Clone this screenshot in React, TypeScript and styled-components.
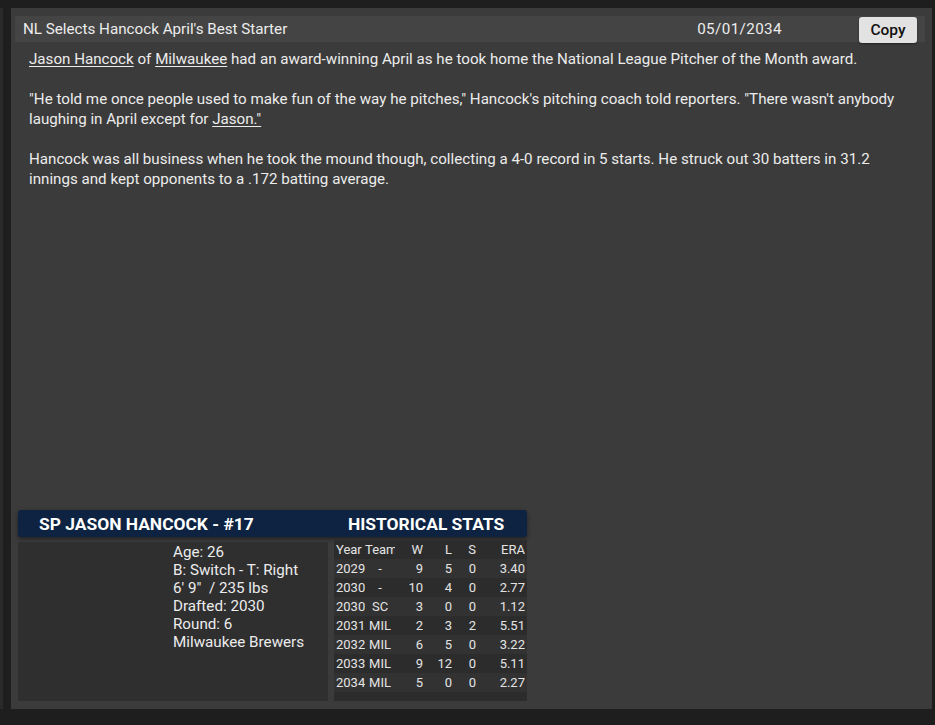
import * as React from "react";
import styled, { createGlobalStyle } from "styled-components";

const GlobalStyle = createGlobalStyle`
  html, body {
    margin: 0;
    padding: 0;
    background: #1e1e1e;
    font-family: Roboto, "Noto Sans", "Liberation Sans", sans-serif;
  }
`;

const Page = styled.div`
  width: 935px;
  height: 725px;
  display: flex;
  box-sizing: border-box;
  padding: 8px 3px 16px 0;
  background: #1e1e1e;
`;

const SideStrip = styled.div`
  width: 3px;
  margin-right: 8px;
  background: #2a2a2a;
`;

const Panel = styled.div`
  flex: 1;
  display: flex;
  flex-direction: column;
  background: #3b3b3b;
  padding: 8px 7px 8px 4px;
  color: #ececec;
`;

const TitleBar = styled.div`
  height: 26px;
  display: flex;
  align-items: center;
  background: #444444;
  padding: 0 8px;
  font-size: 15.2px;
`;

const Title = styled.div`
  flex: 1;
`;

const DateText = styled.div`
  margin-right: 77px;
  letter-spacing: 0.4px;
`;

const CopyButton = styled.button`
  height: 26px;
  width: 58px;
  margin-top: 2px;
  border: none;
  border-radius: 3px;
  background: #e2e2e2;
  color: #111;
  font-family: inherit;
  font-size: 15.5px;
  font-weight: 500;
  box-shadow: 0 1px 2px rgba(0, 0, 0, 0.4);
`;

const Article = styled.div`
  padding: 7px 14px 0 14px;
  font-size: 15.15px;
  line-height: 20px;
`;

const Para = styled.p`
  margin: 0 0 20px 0;
`;

const Link = styled.span`
  text-decoration: underline;
  text-underline-offset: 2px;
`;

const Spacer = styled.div`
  flex: 1;
`;

const Card = styled.div`
  width: 509px;
  margin-left: 3px;
  display: flex;
  flex-direction: column;
`;

const CardHeader = styled.div`
  height: 27px;
  display: grid;
  grid-template-columns: 310px 1fr;
  align-items: center;
  background: #0e2341;
  border-radius: 3px;
  box-shadow: 0 2px 4px rgba(0, 0, 0, 0.45);
  color: #ffffff;
  font-weight: 700;
  font-size: 17.4px;
`;

const HeaderCell = styled.div<{ $pad: number }>`
  padding-left: ${(p) => p.$pad}px;
  white-space: nowrap;
`;

const CardBody = styled.div`
  display: grid;
  grid-template-columns: 310px 193px;
  column-gap: 6px;
  margin-top: 3px;
  height: 161px;
`;

const InfoBox = styled.div`
  background: #2f2f30;
  margin-top: 2px;
  padding: 1px 0 0 155px;
  font-size: 15.2px;
  line-height: 18px;
`;

const InfoLine = styled.div`
  white-space: pre;
`;

const StatsTable = styled.div`
  background: #2c2c2c;
  padding-bottom: 8px;
  font-size: 13px;
`;

const StatRow = styled.div<{ $alt: boolean }>`
  height: 19px;
  display: grid;
  grid-template-columns: 29px 30px 28px 29px 24px 49px;
  align-items: center;
  padding: 0 2px;
  background: ${(p) => (p.$alt ? "#323232" : "#2c2c2c")};
  color: #e4e4e4;
`;

const Cell = styled.div<{ $align: "left" | "center" | "right" }>`
  text-align: ${(p) => p.$align};
  overflow: hidden;
  white-space: nowrap;
`;

const info = [
  "Age: 26",
  "B: Switch - T: Right",
  "6' 9\"  / 235 lbs",
  "Drafted: 2030",
  "Round: 6",
  "Milwaukee Brewers",
];

const stats = [
  ["2029", "-", "9", "5", "0", "3.40"],
  ["2030", "-", "10", "4", "0", "2.77"],
  ["2030", "SC", "3", "0", "0", "1.12"],
  ["2031", "MIL", "2", "3", "2", "5.51"],
  ["2032", "MIL", "6", "5", "0", "3.22"],
  ["2033", "MIL", "9", "12", "0", "5.11"],
  ["2034", "MIL", "5", "0", "0", "2.27"],
];

const aligns: ("left" | "center" | "right")[] = [
  "left",
  "center",
  "right",
  "right",
  "right",
  "right",
];

export default function App() {
  return (
    <>
      <GlobalStyle />
      <Page>
        <SideStrip />
        <Panel>
          <TitleBar>
            <Title>NL Selects Hancock April's Best Starter</Title>
            <DateText>05/01/2034</DateText>
            <CopyButton>Copy</CopyButton>
          </TitleBar>
          <Article>
            <Para>
              <Link>Jason Hancock</Link> of <Link>Milwaukee</Link> had an
              award-winning April as he took home the National League Pitcher
              of the Month award.
            </Para>
            <Para>
              "He told me once people used to make fun of the way he pitches,"
              Hancock's pitching coach told reporters. "There wasn't anybody
              laughing in April except for <Link>Jason."</Link>
            </Para>
            <Para>
              Hancock was all business when he took the mound though,
              collecting a 4-0 record in 5 starts. He struck out 30 batters in
              31.2 innings and kept opponents to a .172 batting average.
            </Para>
          </Article>
          <Spacer />
          <Card>
            <CardHeader>
              <HeaderCell $pad={21}>SP JASON HANCOCK - #17</HeaderCell>
              <HeaderCell $pad={20}>HISTORICAL STATS</HeaderCell>
            </CardHeader>
            <CardBody>
              <InfoBox>
                {info.map((line) => (
                  <InfoLine key={line}>{line}</InfoLine>
                ))}
              </InfoBox>
              <StatsTable>
                <StatRow $alt={false}>
                  {["Year", "Team", "W", "L", "S", "ERA"].map((h, i) => (
                    <Cell key={h} $align={i === 1 ? "left" : aligns[i]}>
                      {h}
                    </Cell>
                  ))}
                </StatRow>
                {stats.map((row, r) => (
                  <StatRow key={r} $alt={r % 2 === 0}>
                    {row.map((v, i) => (
                      <Cell key={i} $align={aligns[i]}>
                        {v}
                      </Cell>
                    ))}
                  </StatRow>
                ))}
              </StatsTable>
            </CardBody>
          </Card>
        </Panel>
      </Page>
    </>
  );
}
